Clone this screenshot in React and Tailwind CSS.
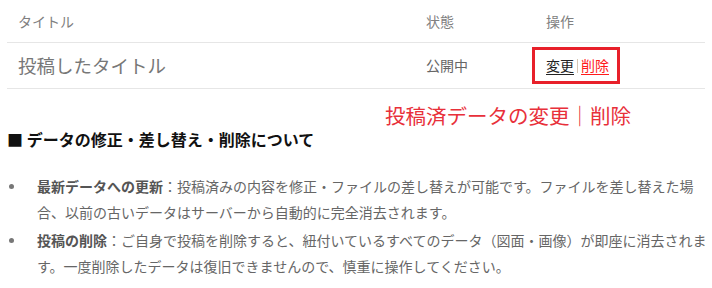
import React from "react";

const font = { fontFamily: '"Noto Sans CJK JP", "Noto Sans", sans-serif' };

export default function App() {
  return (
    <div className="w-[712px] h-[288px] bg-white overflow-hidden" style={font}>
      <div className="px-[7px]">
        <div className="grid grid-cols-[409px_120px_1fr] h-[43px] items-center border-b border-[#e6e6e6] text-[14px] text-[#808080]">
          <div className="pl-[11px]">タイトル</div>
          <div className="pl-[10px]">状態</div>
          <div className="pl-[10px]">操作</div>
        </div>
        <div className="grid grid-cols-[409px_120px_1fr] h-[46px] items-center border-b border-[#e6e6e6]">
          <div className="pl-[11px] text-[18.5px] text-[#777777]">投稿したタイトル</div>
          <div className="pl-[10px] text-[14px] text-[#666666]">公開中</div>
          <div className="pl-[10px]">
            <div className="inline-flex items-center -ml-[14px] border-[3px] border-[#e8202a] pl-[11px] pr-[8px] py-[5px] text-[14px] leading-[21px]">
              <span className="text-[#222222] underline underline-offset-[3px] decoration-[#222222]">変更</span>
              <span className="mx-[3px] w-px h-[14px] bg-[#d6c6b4]"></span>
              <span className="text-[#ff1a1a] underline underline-offset-[3px] decoration-[#ff1a1a]">削除</span>
            </div>
          </div>
        </div>
      </div>
      <div className="mt-[13px] pl-[385px] text-[20.5px] leading-[26px] text-[#e8303a]">投稿済データの変更｜削除</div>
      <div className="pl-[7px] text-[16px] font-bold leading-[22px] text-[#111111]">■ データの修正・差し替え・削除について</div>
      <ul className="mt-[23px] text-[14px] leading-[26px] text-[#666666]">
        <li className="flex mb-[2px]">
          <span className="w-[37px] shrink-0 flex justify-start">
            <span className="ml-[9px] mt-[11px] w-[5px] h-[5px] rounded-full bg-[#777777]"></span>
          </span>
          <span>
            <b className="font-bold text-[#555555]">最新データへの更新</b>：投稿済みの内容を修正・ファイルの差し替えが可能です。ファイルを差し替えた場<br />合、以前の古いデータはサーバーから自動的に完全消去されます。
          </span>
        </li>
        <li className="flex">
          <span className="w-[37px] shrink-0 flex justify-start">
            <span className="ml-[9px] mt-[11px] w-[5px] h-[5px] rounded-full bg-[#777777]"></span>
          </span>
          <span className="whitespace-nowrap">
            <b className="font-bold text-[#555555]">投稿の削除</b>：ご自身で投稿を削除すると、紐付いているすべてのデータ（図面・画像）が即座に消去されま<br />す。一度削除したデータは復旧できませんので、慎重に操作してください。
          </span>
        </li>
      </ul>
    </div>
  );
}
